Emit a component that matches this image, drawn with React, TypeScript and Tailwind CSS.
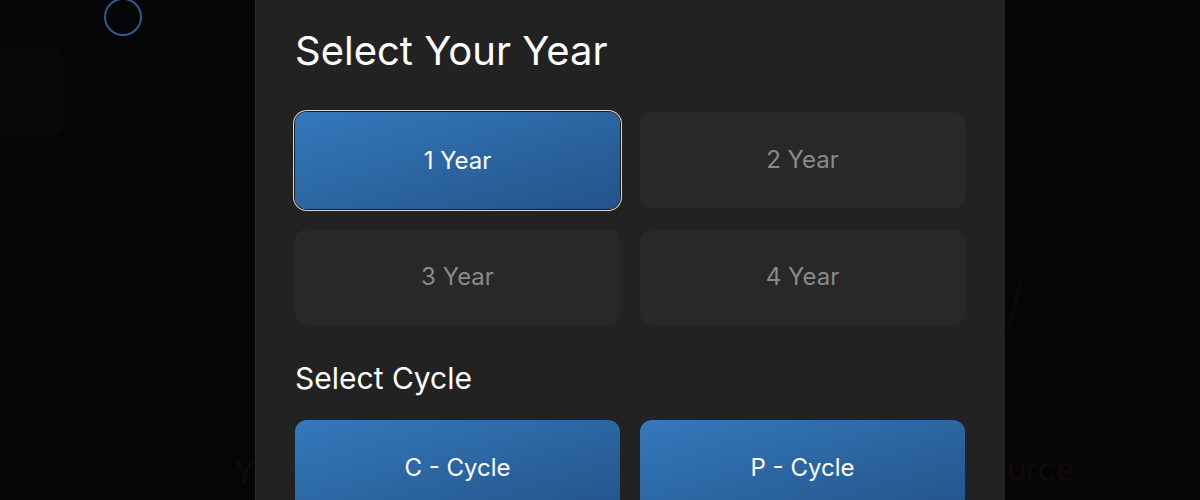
import { useState } from 'react'

const years = ['1 Year', '2 Year', '3 Year', '4 Year']
const cycles = ['C - Cycle', 'P - Cycle']

export default function App() {
  const [year, setYear] = useState('1 Year')

  return (
    <div className="relative h-[500px] w-[1200px] overflow-hidden bg-[#050507] font-['Inter',sans-serif]">
      {/* page behind the overlay */}
      <div className="absolute left-[104px] top-[-2px] h-[38px] w-[38px] rounded-full border-2 border-[#2b5d8c]" />
      <div className="absolute left-[-20px] top-[47px] h-[88px] w-[84px] rounded-xl bg-[#08080a]" />
      <span className="absolute left-[233px] top-[446px] text-[34px] text-[#0f0a06]">Y</span>
      <span className="absolute left-[1004px] top-[262px] text-[58px] font-light text-[#0d0906]">/</span>
      <span className="absolute left-[988px] top-[446px] text-[32px] text-[#0f0a06]">ource</span>

      <div className="relative ml-[255px] flex h-full w-[750px] flex-col bg-[#222222] px-10 pt-[26px] shadow-[inset_1px_0_0_#2c2c2c]">
        <h2 className="text-[40px] leading-[50px] text-white">Select Your Year</h2>

        <div className="mt-[36px] grid grid-cols-2 gap-5">
          {years.map((y) =>
            y === year ? (
              <button
                key={y}
                onClick={() => setYear(y)}
                className="h-[97px] rounded-xl bg-gradient-to-br from-[#3479bb] to-[#23538a] text-[24px] text-white shadow-[0_0_0_1px_#1c1c1c,0_0_0_2px_#d8d8d8]"
              >
                {y}
              </button>
            ) : (
              <button
                key={y}
                onClick={() => setYear(y)}
                className="h-[96px] rounded-xl bg-[#282828] text-[24px] text-[#8a8a8a]"
              >
                {y}
              </button>
            )
          )}
        </div>

        <h3 className="mt-[34px] text-[30px] leading-[38px] text-white">Select Cycle</h3>

        <div className="mt-[23px] grid grid-cols-2 gap-5">
          {cycles.map((c) => (
            <button
              key={c}
              className="h-[96px] rounded-xl bg-gradient-to-br from-[#3479bb] to-[#23538a] text-[24px] text-white"
            >
              {c}
            </button>
          ))}
        </div>
      </div>
    </div>
  )
}
